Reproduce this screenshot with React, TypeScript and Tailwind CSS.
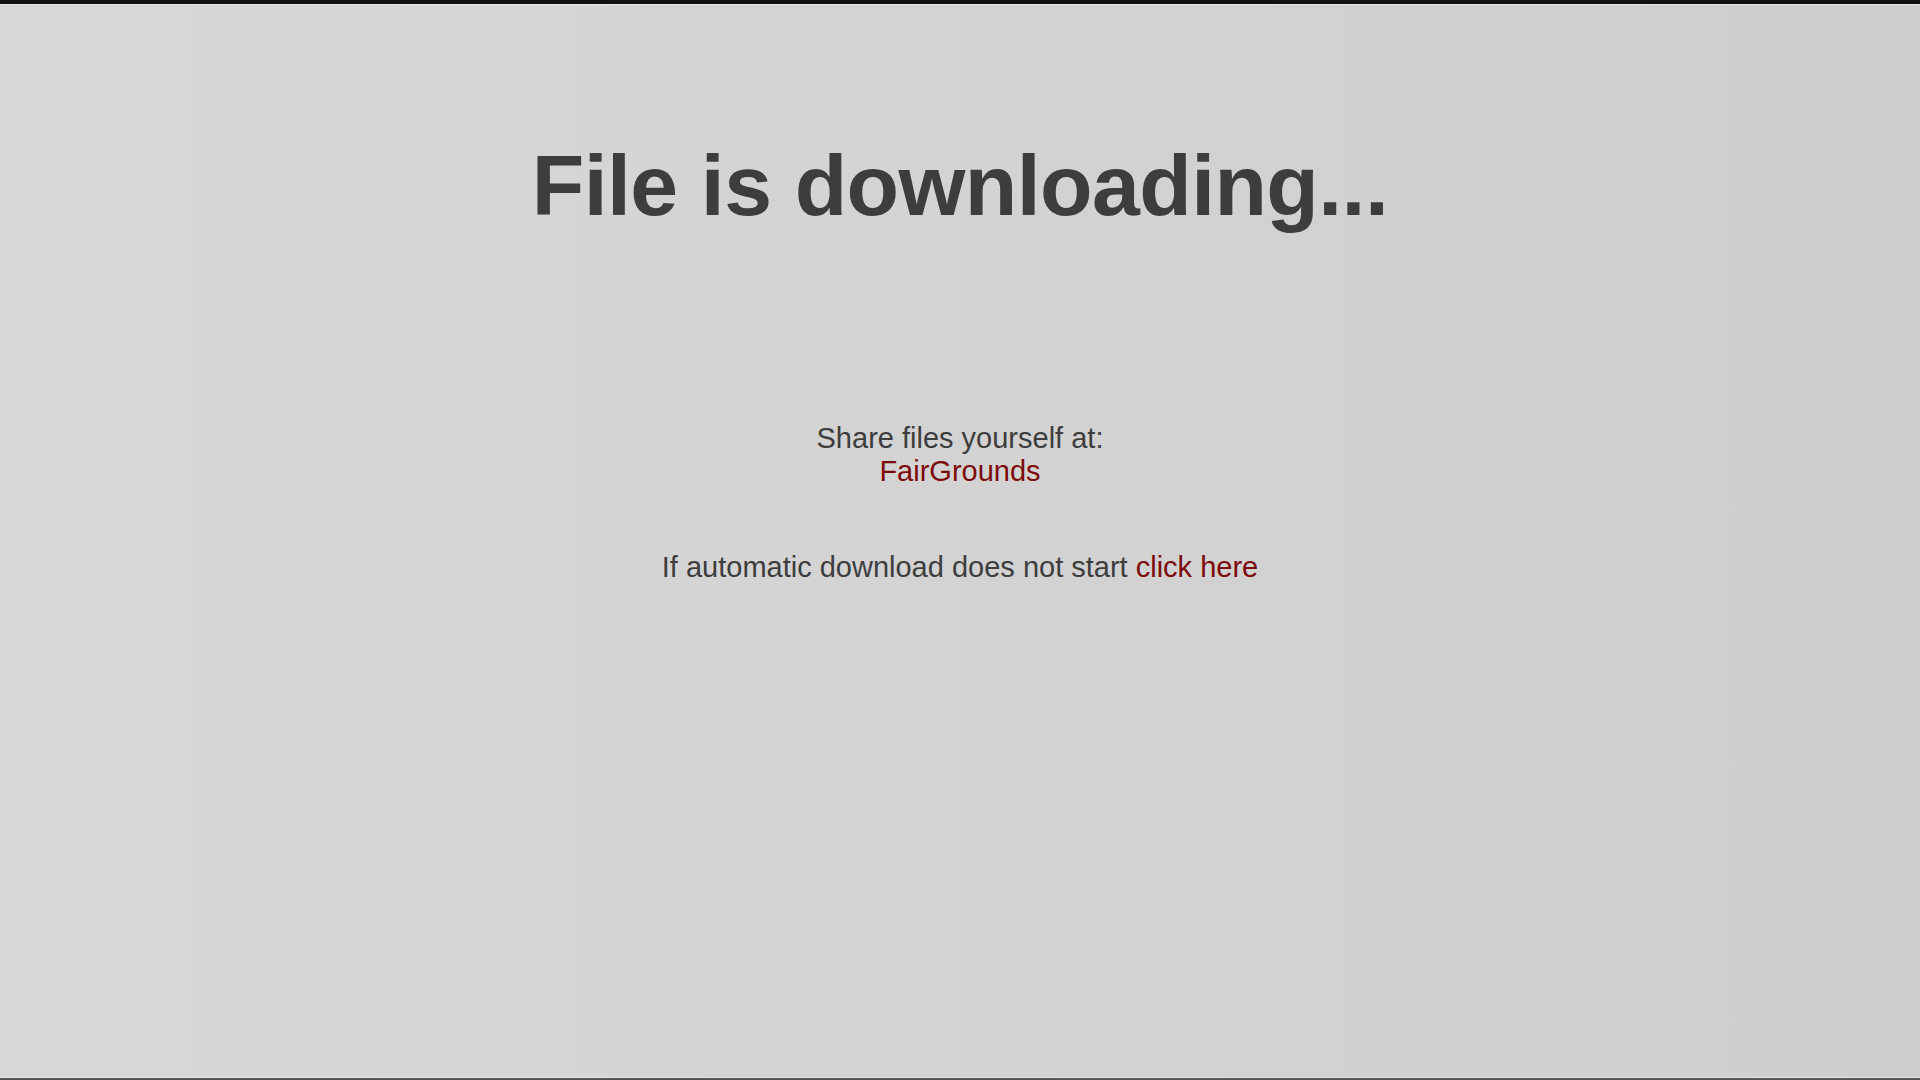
export default function App() {
  return (
    <div className="w-full h-screen flex flex-col overflow-hidden" style={{ fontFamily: '"Liberation Sans", Arial, sans-serif' }}>
      <div className="h-[4px] bg-[#111111] shrink-0" />
      <div className="h-px bg-[#e6e6e6] shrink-0" />
      <div className="flex-1 flex flex-col items-center bg-gradient-to-r from-[#d8d8d8] to-[#cecece] text-[#3d3d3d]">
        <h1 className="mt-[130px] text-[86px] leading-[100px] font-bold tracking-[-0.6px]">File is downloading...</h1>
        <div className="mt-[187px] text-[29px] leading-[33px] text-center">
          <div>Share files yourself at:</div>
          <a href="#" className="text-[#7d0a0a]">FairGrounds</a>
        </div>
        <div className="mt-[63px] text-[29px] leading-[33px]">
          If automatic download does not start <a href="#" className="text-[#7d0a0a]">click here</a>
        </div>
      </div>
      <div className="h-px bg-[#e6e6e6] shrink-0" />
      <div className="h-[2px] bg-[#555555] shrink-0" />
    </div>
  );
}
